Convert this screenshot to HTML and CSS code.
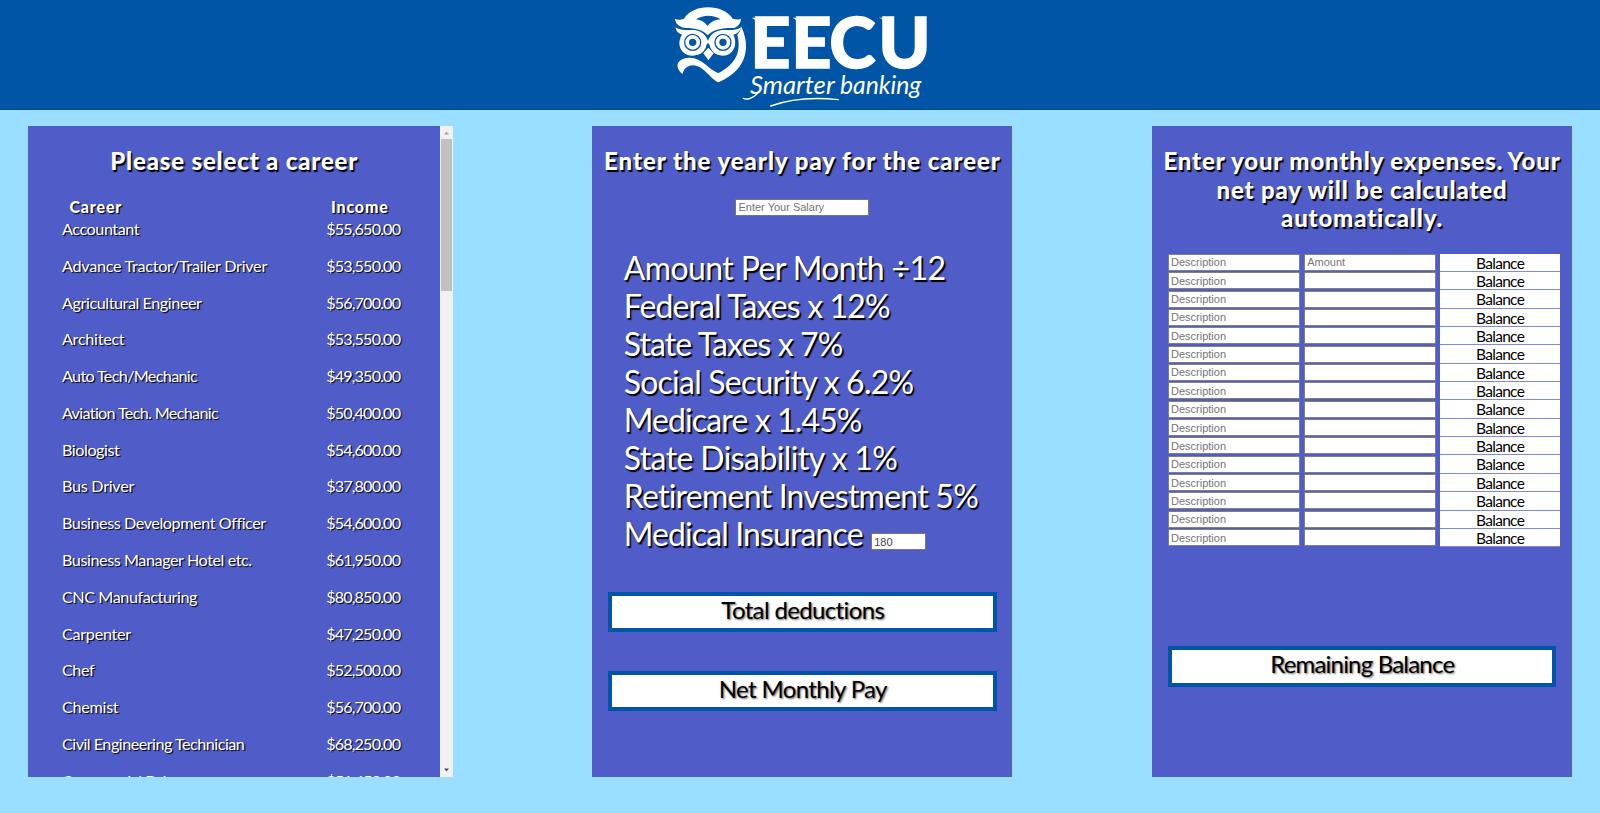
FILE: index.html
```
<!DOCTYPE html>
<html lang="en">
<head>
<meta charset="utf-8">
<title>EECU Budget</title>
<link rel="stylesheet" href="styles.css">
</head>
<body>
<header class="header">
  <svg class="logo" viewBox="0 0 840 327" role="img" aria-label="EECU Smarter banking">
    <g fill="#fff">
      <path d="M72 56C98 10 190 10 218 56C232 60 240 58 243 56C242 72 232 84 214 84C180 84 158 90 143 106C130 90 108 84 76 84C56 80 46 70 45 56C52 60 62 60 72 56ZM108 58C122 60 134 66 143 78C152 66 164 60 182 58C160 44 130 44 108 58Z" fill-rule="evenodd"/>
      <path d="M47 82C62 93 84 90 104 90C124 92 138 106 144 122C150 106 164 92 186 90C206 90 228 93 243 82C240 94 232 102 220 104C234 130 222 167 188 167C166 167 152 152 149 136L144 128L139 136C137 152 122 167 98 167C62 167 48 130 66 104C54 100 47 92 47 82Z"/>
      <path d="M145 143L161 160L145 181L130 160Z"/>
      <path d="M243 78C268 130 272 204 176 247C152 240 134 198 98 196C80 198 70 208 68 222C40 200 52 174 88 173C126 172 146 210 176 219C222 194 246 160 232 104C238 98 243 90 243 78Z"/>
    </g>
    <g fill="none" stroke="#0055a6">
      <circle cx="98" cy="127" r="24" stroke-width="4"/>
      <circle cx="189" cy="127" r="24" stroke-width="4"/>
    </g>
    <g fill="#0055a6"><circle cx="98" cy="127" r="11"/><circle cx="189" cy="127" r="11"/></g>
    <text class="logo-name" y="205" x="271 394 508 655">EECU</text>
    <path fill="#fff" d="M289 53h-14c8 3 12 8 14 16zM412 53h-14c8 3 12 8 14 16zM676 53h-20c11 2 17 8 20 18zM782 53h17c-9 2-14 8-17 18z"/>
    <text class="logo-tag" y="282" x="270" textLength="254" lengthAdjust="spacingAndGlyphs">Smarter</text>
    <text class="logo-tag" y="282" x="540" textLength="244" lengthAdjust="spacingAndGlyphs">banking</text>
    <path d="M292 281C278 296 260 300 250 295M332 318C390 297 450 290 535 299" fill="none" stroke="#fff" stroke-width="4" stroke-linecap="round"/>
  </svg>
</header>
<main class="columns">
  <section class="panel careers">
    <div class="careers-body">
      <h2 class="title">Please select a career</h2>
      <div class="career-head"><b>Career</b><b>Income</b></div>
      <ul class="career-list">
        <li><span>Accountant</span><span class="pay">$55,650.00</span></li>
        <li><span class="open">Advance Tractor/Trailer Driver</span><span class="pay">$53,550.00</span></li>
        <li><span>Agricultural Engineer</span><span class="pay">$56,700.00</span></li>
        <li><span class="open">Architect</span><span class="pay">$53,550.00</span></li>
        <li><span class="tight">Auto Tech/Mechanic</span><span class="pay">$49,350.00</span></li>
        <li><span class="tight">Aviation Tech. Mechanic</span><span class="pay">$50,400.00</span></li>
        <li><span>Biologist</span><span class="pay">$54,600.00</span></li>
        <li><span class="open">Bus Driver</span><span class="pay">$37,800.00</span></li>
        <li><span>Business Development Officer</span><span class="pay">$54,600.00</span></li>
        <li><span>Business Manager Hotel etc.</span><span class="pay">$61,950.00</span></li>
        <li><span>CNC Manufacturing</span><span class="pay">$80,850.00</span></li>
        <li><span class="open">Carpenter</span><span class="pay">$47,250.00</span></li>
        <li><span>Chef</span><span class="pay">$52,500.00</span></li>
        <li><span class="open">Chemist</span><span class="pay">$56,700.00</span></li>
        <li><span class="snug">Civil Engineering Technician</span><span class="pay">$68,250.00</span></li>
        <li><span>Commercial Driver</span><span class="pay">$51,450.00</span></li>
      </ul>
    </div>
    <div class="scrollbar">
      <svg class="arrow" viewBox="0 0 13 13"><path d="M4 8.5L6.5 5.5L9 8.5Z" fill="#a3a3a3"/></svg>
      <div class="thumb"></div>
      <svg class="arrow" viewBox="0 0 13 13"><path d="M4 4.5L6.5 7.5L9 4.5Z" fill="#505050"/></svg>
    </div>
  </section>

  <section class="panel">
    <h2 class="title wide">Enter the yearly pay for the career</h2>
    <input class="field salary" placeholder="Enter Your Salary">
    <ul class="deductions">
      <li class="d-open">Amount Per Month ÷12</li>
      <li class="d-tight">Federal Taxes x 12%</li>
      <li class="d-tight">State Taxes x 7%</li>
      <li>Social Security x 6.2%</li>
      <li class="d-tight">Medicare x 1.45%</li>
      <li class="d-open">State Disability x 1%</li>
      <li>Retirement Investment 5%</li>
      <li><span class="d-tight">Medical Insurance</span><input class="field insurance" value="180"></li>
    </ul>
    <div class="result total">Total deductions</div>
    <div class="result net">Net Monthly Pay</div>
  </section>

  <section class="panel">
    <h2 class="title narrow">Enter your monthly expenses.<span class="kern"> </span>Your<br>net pay will be calculated<br>automatically.</h2>
    <div class="expenses">
      <input class="field" placeholder="Description"><input class="field" placeholder="Amount"><span class="balance">Balance</span>
      <input class="field" placeholder="Description"><input class="field"><span class="balance">Balance</span>
      <input class="field" placeholder="Description"><input class="field"><span class="balance">Balance</span>
      <input class="field" placeholder="Description"><input class="field"><span class="balance">Balance</span>
      <input class="field" placeholder="Description"><input class="field"><span class="balance">Balance</span>
      <input class="field" placeholder="Description"><input class="field"><span class="balance">Balance</span>
      <input class="field" placeholder="Description"><input class="field"><span class="balance">Balance</span>
      <input class="field" placeholder="Description"><input class="field"><span class="balance">Balance</span>
      <input class="field" placeholder="Description"><input class="field"><span class="balance">Balance</span>
      <input class="field" placeholder="Description"><input class="field"><span class="balance">Balance</span>
      <input class="field" placeholder="Description"><input class="field"><span class="balance">Balance</span>
      <input class="field" placeholder="Description"><input class="field"><span class="balance">Balance</span>
      <input class="field" placeholder="Description"><input class="field"><span class="balance">Balance</span>
      <input class="field" placeholder="Description"><input class="field"><span class="balance">Balance</span>
      <input class="field" placeholder="Description"><input class="field"><span class="balance">Balance</span>
      <input class="field" placeholder="Description"><input class="field"><span class="balance">Balance</span>
    </div>
    <div class="result remaining">Remaining Balance</div>
  </section>
</main>
</body>
</html>
```
FILE: styles.css
```
* { box-sizing: border-box; }

body {
  margin: 0;
  height: 813px;
  overflow: hidden;
  background: #9adfff;
  color: #fff;
  font-family: "Gill Sans", "Gill Sans MT", Lato, sans-serif;
}

ul { list-style: none; margin: 0; padding: 0; }

.header {
  height: 110px;
  display: flex;
  justify-content: center;
  background: #0055a6;
  border-bottom: 1px solid #004a98;
}
.logo { width: 280px; height: 109px; }
.logo-name { font: 900 211px Lato, sans-serif; fill: #fff; stroke: #fff; stroke-width: 4px; }
.logo-tag { font: italic 400 78px Lato, sans-serif; fill: #fff; }

.columns {
  display: flex;
  justify-content: space-between;
  padding: 16px 28px 0 28.4px;
}
.panel {
  width: 420px;
  height: 651px;
  overflow: hidden;
  background: #505dc8;
}
.careers { display: flex; width: 424.6px; }
.careers-body { flex: 1; }

.title {
  margin: 21px 0 0;
  font-size: 24px;
  line-height: 28.5px;
  font-weight: 900;
  letter-spacing: .83px;
  text-align: center;
  white-space: nowrap;
  text-shadow: 1.5px 1.5px 1px #000;
}
.wide { letter-spacing: .97px; }
.narrow { letter-spacing: .85px; }
.kern { letter-spacing: -1.5px; }

.career-head, .career-list li {
  display: grid;
  grid-template-columns: 264.2px 1fr;
  padding-left: 33.6px;
  line-height: 22.5px;
  white-space: nowrap;
  text-shadow: 1.2px 1.2px 1px #000;
}
.career-head {
  margin-top: 20.5px;
  padding-left: 41px;
  grid-template-columns: 261.5px 1fr;
  font-size: 16px;
  letter-spacing: .85px;
}
.career-head b { font-weight: 900; }
.career-list { margin-top: -.6px; }
.career-list li {
  height: 36.81px;
  font-size: 16.2px;
  letter-spacing: -.44px;
}
.career-list .open { letter-spacing: -.29px; }
.career-list .snug { letter-spacing: -.52px; }
.career-list .tight { letter-spacing: -.68px; }
.career-list .pay { letter-spacing: -.86px; }

.scrollbar {
  width: 13px;
  display: flex;
  flex-direction: column;
  align-items: center;
  background: #f1f1f1;
}
.arrow { width: 13px; height: 13px; flex: none; }
.thumb { width: 11px; height: 152px; margin-bottom: auto; background: #c1c1c1; }

.field {
  height: 16.5px;
  padding: 0 2px;
  border: 1px solid #767676;
  border-radius: 0;
  background: #fff;
  color: #444;
  font: 11px "Liberation Sans", Arial, sans-serif;
}
.field::placeholder { color: #757575; }
.salary { display: block; width: 134px; margin: 23.5px auto 0 143px; }

.deductions {
  margin: 33px 0 0 31.2px;
  font-size: 32px;
  line-height: 38px;
  letter-spacing: -.76px;
  white-space: nowrap;
  text-shadow: 1.6px 1.6px 1px #000;
}
.deductions li { height: 38px; }
.d-open { letter-spacing: -.6px; }
.d-tight { letter-spacing: -.88px; }
.insurance { width: 54.5px; margin-left: 8.5px; vertical-align: 0; }

.result {
  height: 40.5px;
  margin: 0 15.5px 0 16px;
  border: 4px solid #0055a6;
  background: #fff;
  color: #000;
  font-size: 24px;
  line-height: 28px;
  letter-spacing: -.64px;
  text-align: center;
  text-shadow: 1.2px 1.2px 2px rgba(0, 0, 0, .6);
}
.total { margin-top: 39px; }
.net { margin-top: 38.5px; }
.remaining { margin-top: 98.8px; letter-spacing: -.8px; }

.expenses {
  display: grid;
  grid-template-columns: 132px 131.5px 120.5px;
  grid-auto-rows: 18.37px;
  column-gap: 4.2px;
  margin: 21px 0 0 16px;
}
.expenses .field { margin-top: .3px; width: 100%; height: 17px; border-color: #808080; }
.balance {
  border-bottom: 1px solid #8089da;
  background: #fff;
  color: #000;
  font-size: 15.5px;
  line-height: 18.6px;
  letter-spacing: -.72px;
  text-align: center;
}
```
